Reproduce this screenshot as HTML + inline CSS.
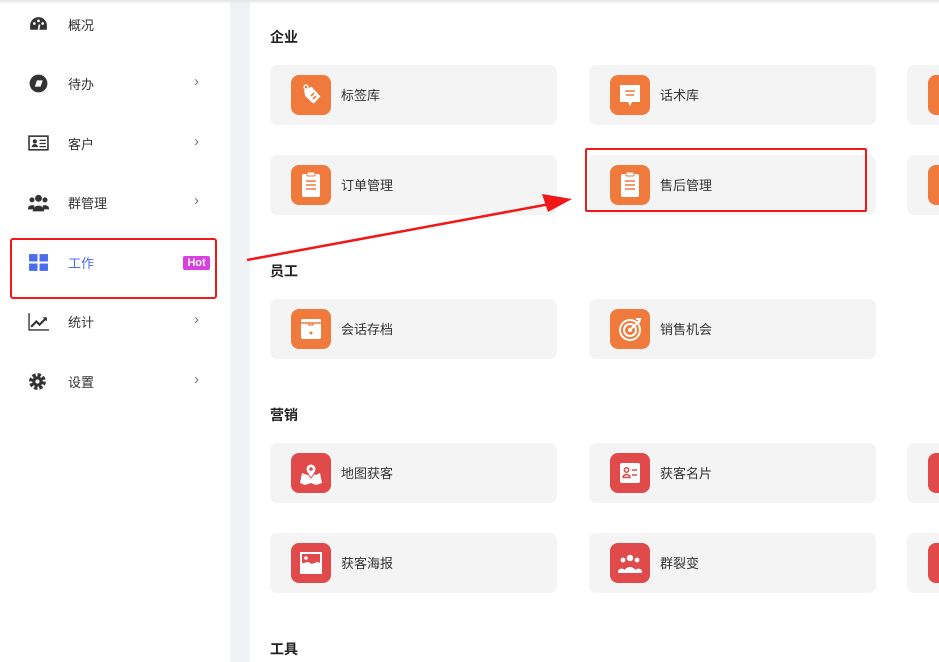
<!DOCTYPE html>
<html><head><meta charset="utf-8"><style>
*{margin:0;padding:0;box-sizing:border-box}
body{width:939px;height:662px;overflow:hidden;background:#fff;font-family:"Liberation Sans","Noto Sans CJK SC",sans-serif;position:relative;color:#333}
.side{position:absolute;left:0;top:0;width:230px;height:662px;background:#fff}
.gap{position:absolute;left:230px;top:0;width:20px;height:662px;background:#f0f2f5}
.topsh{position:absolute;left:0;top:0;width:939px;height:4px;background:linear-gradient(#e4e4e4,rgba(255,255,255,0))}
.it{position:absolute;left:0;width:230px;height:20px;font-size:13px;color:#333}
.it .ic{position:absolute;left:28px;top:0;width:21px;height:19px}
.it .t{position:absolute;left:68px;top:0}
.it .ch{position:absolute;left:194px;top:-1px;color:#777;font-size:15px}
.hot{position:absolute;left:183px;top:256px;width:27px;height:14px;background:#d940e0;color:#fff;font-size:11px;font-weight:bold;border-radius:2px;text-align:center;line-height:14px}
.box1{position:absolute;left:10px;top:238px;width:207px;height:61px;border:2px solid #f01818;border-radius:3px}
.box2{position:absolute;left:585px;top:148px;width:282px;height:64px;border:2px solid #f01818;border-radius:2px}
.h{position:absolute;left:270px;font-size:14px;font-weight:bold;color:#222}
.c{position:absolute;width:287px;height:60px;background:#f4f4f4;border-radius:7px}
.c .i{position:absolute;left:21px;top:10px;width:40px;height:40px;border-radius:8px;background:#ef7a3b}
.c.r .i{background:#e04a4a}
.c .i svg{width:40px;height:40px}
.c .l{position:absolute;left:71px;top:20px;font-size:13px;color:#333}
</style></head><body>
<div class="side">
<div class="it" style="top:15px"><svg class="ic" viewBox="0 0 20 18"><path d="M10 2a8 8 0 0 0-8 8v4h16v-4a8 8 0 0 0-8-8z" fill="#333"/><circle cx="6" cy="8" r="1.3" fill="#fff"/><circle cx="10" cy="5.5" r="1.3" fill="#fff"/><circle cx="14" cy="8" r="1.3" fill="#fff"/><path d="M10 14l1-5" stroke="#fff" stroke-width="1.6"/></svg><span class="t">概况</span></div>
<div class="it" style="top:74px"><svg class="ic" viewBox="0 0 20 18"><circle cx="10" cy="9" r="8.5" fill="#333"/><path d="M6.5 12l2-6h5.5l-2 6z" fill="#fff"/></svg><span class="t">待办</span><span class="ch">›</span></div>
<div class="it" style="top:134px"><svg class="ic" viewBox="0 0 20 18"><rect x="1" y="2" width="18" height="13" fill="none" stroke="#333" stroke-width="1.5"/><circle cx="6.5" cy="7" r="2" fill="#333"/><path d="M3.5 12.5a3 3 0 0 1 6 0z" fill="#333"/><path d="M11 6h6M11 9h6M11 12h6" stroke="#333" stroke-width="1.2"/></svg><span class="t">客户</span><span class="ch">›</span></div>
<div class="it" style="top:193px"><svg class="ic" viewBox="0 0 20 18"><circle cx="10" cy="5" r="3.3" fill="#333"/><circle cx="3.8" cy="6.5" r="2.4" fill="#333"/><circle cx="16.2" cy="6.5" r="2.4" fill="#333"/><path d="M4.5 17.5a5.5 5.5 0 0 1 11 0z" fill="#333"/><path d="M0 15a4 3 0 0 1 6-3v3.5H0zM20 15a4 3 0 0 0-6-3v3.5h6z" fill="#333"/></svg><span class="t">群管理</span><span class="ch">›</span></div>
<div class="it" style="top:253px"><svg class="ic" viewBox="0 0 20 18"><rect x="1" y="1" width="8" height="7" fill="#4a6cf0"/><rect x="11" y="1" width="8" height="7" fill="#4a6cf0"/><rect x="1" y="10" width="8" height="7" fill="#4a6cf0"/><rect x="11" y="10" width="8" height="7" fill="#4a6cf0"/></svg><span class="t" style="color:#4a6cf0">工作</span></div>
<div class="it" style="top:312px"><svg class="ic" viewBox="0 0 20 18"><path d="M1 1v16h19" fill="none" stroke="#333" stroke-width="1.3"/><path d="M3 14l5-5 3 3 6-6" fill="none" stroke="#333" stroke-width="2"/><path d="M14 5h4v4z" fill="#333"/></svg><span class="t">统计</span><span class="ch">›</span></div>
<div class="it" style="top:372px"><svg class="ic" viewBox="0 0 20 18"><circle cx="9" cy="9" r="6" fill="none" stroke="#333" stroke-width="4" stroke-dasharray="3 1.7"/><circle cx="9" cy="9" r="5" fill="#333"/><circle cx="9" cy="9" r="2" fill="#fff"/></svg><span class="t">设置</span><span class="ch">›</span></div>
<div class="hot">Hot</div>
<div class="box1"></div>
</div>
<div class="gap"></div>
<div class="topsh"></div>

<div class="h" style="top:27px">企业</div>
<div class="h" style="top:261px">员工</div>
<div class="h" style="top:405px">营销</div>
<div class="h" style="top:639px">工具</div>

<div class="c" style="left:270px;top:65px"><div class="i"><svg viewBox="0 0 40 40"><path d="M14 14l8-2 7 11-8 6-7-9z" fill="#fff" transform="rotate(-10 20 20)"/><circle cx="15" cy="12" r="2" fill="none" stroke="#fff" stroke-width="1.3"/><path d="M20 21l3-3M22 24l3-3" stroke="#ef7a3b" stroke-width="1.6"/></svg></div><span class="l">标签库</span></div>
<div class="c" style="left:589px;top:65px"><div class="i"><svg viewBox="0 0 40 40"><path d="M10 10h20v17h-8l-2 4-2-4h-8z" fill="#fff"/><path d="M15 16h10M16 20h8" stroke="#ef7a3b" stroke-width="1.6"/></svg></div><span class="l">话术库</span></div>
<div class="c" style="left:907px;top:65px"><div class="i"></div></div>

<div class="c" style="left:270px;top:155px"><div class="i"><svg viewBox="0 0 40 40"><rect x="11" y="9" width="18" height="23" rx="2" fill="#fff"/><rect x="16" y="7" width="8" height="4" rx="1" fill="#fff" stroke="#ef7a3b"/><path d="M15 16h10M15 20h10M15 24h10" stroke="#ef7a3b" stroke-width="1.6"/></svg></div><span class="l">订单管理</span></div>
<div class="c" style="left:589px;top:155px"><div class="i"><svg viewBox="0 0 40 40"><rect x="11" y="9" width="18" height="23" rx="2" fill="#fff"/><rect x="16" y="7" width="8" height="4" rx="1" fill="#fff" stroke="#ef7a3b"/><path d="M15 16h10M15 20h10M15 24h10" stroke="#ef7a3b" stroke-width="1.6"/></svg></div><span class="l">售后管理</span></div>
<div class="c" style="left:907px;top:155px"><div class="i"></div></div>

<div class="c" style="left:270px;top:299px"><div class="i"><svg viewBox="0 0 40 40"><rect x="10" y="10" width="20" height="20" rx="2" fill="#fff"/><path d="M10 14h20" stroke="#ef7a3b" stroke-width="1.5"/><path d="M18 14v2h4v-2" stroke="#ef7a3b" stroke-width="1.3" fill="none"/><circle cx="20" cy="24" r="1.5" fill="#ef7a3b"/></svg></div><span class="l">会话存档</span></div>
<div class="c" style="left:589px;top:299px"><div class="i"><svg viewBox="0 0 40 40"><circle cx="20" cy="21" r="10" fill="none" stroke="#fff" stroke-width="2"/><circle cx="20" cy="21" r="6" fill="none" stroke="#fff" stroke-width="2"/><circle cx="20" cy="21" r="2" fill="#fff"/><path d="M20 21l9-9M26 10l4 0-1 4" stroke="#fff" stroke-width="2" fill="none"/></svg></div><span class="l">销售机会</span></div>

<div class="c r" style="left:270px;top:443px"><div class="i"><svg viewBox="0 0 40 40"><path d="M11 20l5 2 4-2 5 2 4-2 2 10-6 2-5-2-6 2-5-2z" fill="#fff"/><path d="M20 25c-4-5-5-7-5-9a5 5 0 0 1 10 0c0 2-1 4-5 9z" fill="#fff" stroke="#e04a4a"/><circle cx="20" cy="16" r="1.8" fill="#e04a4a"/></svg></div><span class="l">地图获客</span></div>
<div class="c r" style="left:589px;top:443px"><div class="i"><svg viewBox="0 0 40 40"><rect x="10" y="10" width="20" height="20" rx="2" fill="#fff"/><circle cx="16.5" cy="17" r="2.2" fill="none" stroke="#e04a4a" stroke-width="1.5"/><path d="M13 24.5a3.5 3 0 0 1 7 0z" fill="none" stroke="#e04a4a" stroke-width="1.5"/><path d="M22 17h5M22 22h5" stroke="#e04a4a" stroke-width="1.6"/></svg></div><span class="l">获客名片</span></div>
<div class="c r" style="left:907px;top:443px"><div class="i"></div></div>

<div class="c r" style="left:270px;top:533px"><div class="i"><svg viewBox="0 0 40 40"><rect x="9" y="9" width="22" height="22" fill="#fff"/><path d="M11 11h18v9c-4-3-7 3-10 0-3-3-5 1-8 0z" fill="#e04a4a"/><circle cx="15" cy="15" r="1.8" fill="#fff"/></svg></div><span class="l">获客海报</span></div>
<div class="c r" style="left:589px;top:533px"><div class="i"><svg viewBox="0 0 40 40"><circle cx="20" cy="15" r="3.2" fill="#fff"/><circle cx="13" cy="17" r="2.4" fill="#fff"/><circle cx="27" cy="17" r="2.4" fill="#fff"/><path d="M14 30a6 6 0 0 1 12 0z" fill="#fff"/><path d="M8 28a4 3.5 0 0 1 7-1v3H8zM32 28a4 3.5 0 0 0-7-1v3h7z" fill="#fff"/></svg></div><span class="l">群裂变</span></div>
<div class="c r" style="left:907px;top:533px"><div class="i"></div></div>

<div class="box2"></div>
<svg style="position:absolute;left:0;top:0" width="939" height="662"><path d="M247 260L550 204" stroke="#f01818" stroke-width="2.5"/><path d="M542 194L572 199L548 212z" fill="#f01818"/></svg>
</body></html>
